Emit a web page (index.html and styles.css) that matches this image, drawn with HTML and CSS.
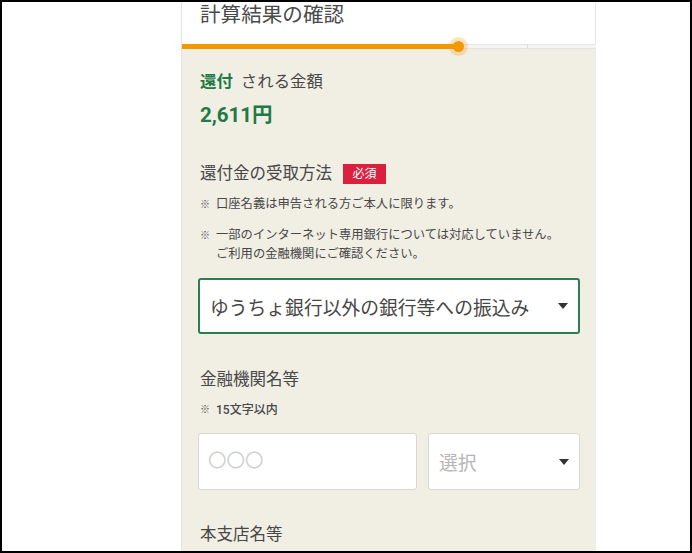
FILE: index.html
```html
<!DOCTYPE html>
<html lang="ja">
<head>
    <meta charset="UTF-8">
    <meta name="viewport" content="width=device-width, initial-scale=1.0">
    <title>計算結果の確認</title>
    <link rel="stylesheet" href="styles.css">
</head>
<body>
    <div class="frame">
        <div class="card">
            <div class="header">
                <h1>計算結果の確認</h1>
            </div>
            <div class="progress">
                <div class="progress-fill"></div>
                <div class="progress-dot"></div>
                <div class="progress-step"></div>
            </div>

            <div class="content">
                <p class="amount-label"><span class="green">還付</span> される金額</p>
                <p class="amount">2,611円</p>

                <div class="field-title">
                    <span>還付金の受取方法</span>
                    <span class="badge">必須</span>
                </div>
                <ul class="notes">
                    <li>口座名義は申告される方ご本人に限ります。</li>
                    <li>一部のインターネット専用銀行については対応していません。<br>ご利用の金融機関にご確認ください。</li>
                </ul>

                <div class="select select-active">
                    <span>ゆうちょ銀行以外の銀行等への振込み</span>
                    <span class="caret"></span>
                </div>

                <div class="field-title field-gap">金融機関名等</div>
                <ul class="notes notes-small">
                    <li>15文字以内</li>
                </ul>
                <div class="input-row">
                    <div class="input placeholder">〇〇〇</div>
                    <div class="select select-small">
                        <span class="placeholder">選択</span>
                        <span class="caret"></span>
                    </div>
                </div>

                <div class="field-title field-gap-2">本支店名等</div>
            </div>
        </div>
    </div>
</body>
</html>
```

FILE: styles.css
```css
* {
    box-sizing: border-box;
}

body {
    margin: 0;
    font-family: Roboto, "Noto Sans CJK JP", sans-serif;
    color: #474747;
}

.frame {
    width: 692px;
    height: 553px;
    border: 2px solid #000;
    overflow: hidden;
    background-color: #fff;
}

.card {
    margin-left: 179px;
    width: 415px;
    height: 100%;
    background-color: #f1eee4;
    border-left: 1px solid #e4e2da;
}

.header {
    height: 42px;
    background-color: #fff;
    border-right: 1px solid #e6e6e6;
    padding-left: 18px;
}

h1 {
    margin: 0;
    padding-top: 0;
    font-size: 20.6px;
    line-height: 26px;
    font-weight: 400;
    color: #4a4a4a;
}

.progress {
    position: relative;
    height: 5px;
    background-color: #f5f5f5;
    border-top: 1px solid #e4e4e4;
    border-bottom: 1px solid #e4e4e4;
}

.progress-fill {
    position: absolute;
    left: 0;
    top: -1px;
    width: 276px;
    height: 5px;
    background-color: #f39800;
}

.progress-dot {
    position: absolute;
    left: 267px;
    top: -8px;
    width: 19px;
    height: 19px;
    border-radius: 50%;
    background-color: rgba(243, 152, 0, 0.25);
}

.progress-dot::after {
    content: "";
    position: absolute;
    left: 4px;
    top: 4px;
    width: 11px;
    height: 11px;
    border-radius: 50%;
    background-color: #f39800;
}

.progress-step {
    position: absolute;
    left: 345px;
    top: -1px;
    width: 1px;
    height: 5px;
    background-color: #dcdcdc;
}

.content {
    padding: 0 16px;
}

.content p {
    margin: 0;
}

.amount-label {
    margin-top: 21px !important;
    padding-left: 2px;
    font-size: 16.4px;
    line-height: 24px;
}

.green {
    color: #1e7a46;
    font-weight: 700;
    margin-right: 4px;
}

.amount {
    margin-top: 7px !important;
    padding-left: 2px;
    font-size: 20.5px;
    line-height: 28px;
    font-weight: 700;
    color: #1e7a46;
}

.field-title {
    display: flex;
    align-items: center;
    gap: 11px;
    margin-top: 33px;
    padding-left: 2px;
    font-size: 16.5px;
    line-height: 24px;
}

.field-gap {
    margin-top: 34px;
}

.field-gap-2 {
    margin-top: 33px;
}

.badge {
    display: inline-block;
    width: 43px;
    height: 20px;
    background-color: #d9213f;
    color: #fff;
    font-size: 12px;
    line-height: 20px;
    text-align: center;
}

.notes {
    list-style: none;
    margin: 9px 0 0;
    padding: 0 0 0 2px;
    font-size: 12.3px;
    line-height: 19px;
}

.notes li {
    position: relative;
    padding-left: 16px;
}

.notes li + li {
    margin-top: 12px;
}

.notes li::before {
    content: "※";
    position: absolute;
    left: 0;
    top: 0;
    font-size: 10px;
    font-weight: 700;
    color: #555;
}

.notes-small {
    font-size: 12px;
    line-height: 18px;
    font-weight: 500;
}

.select {
    display: flex;
    align-items: center;
    justify-content: space-between;
    background-color: #fff;
    border: 1px solid #d9d7cf;
    border-radius: 3px;
    padding: 0 10px 0 10px;
    font-size: 18.8px;
}

.select-active {
    margin-top: 14px;
    height: 56px;
    border: 2px solid #2c7d4f;
    padding-left: 10px;
    color: #474747;
}

.caret {
    width: 0;
    height: 0;
    border-left: 5px solid transparent;
    border-right: 5px solid transparent;
    border-top: 6px solid #333;
}

.input-row {
    display: grid;
    grid-template-columns: 1fr 152px;
    gap: 11px;
    margin-top: 14px;
}

.input {
    height: 57px;
    background-color: #fff;
    border: 1px solid #d9d7cf;
    border-radius: 3px;
    padding-left: 9px;
    font-size: 18.5px;
    line-height: 55px;
}

.select-small {
    height: 57px;
}

.placeholder {
    color: #b5b5b5;
}

.input.placeholder {
    color: #cfcfcf;
}
```
